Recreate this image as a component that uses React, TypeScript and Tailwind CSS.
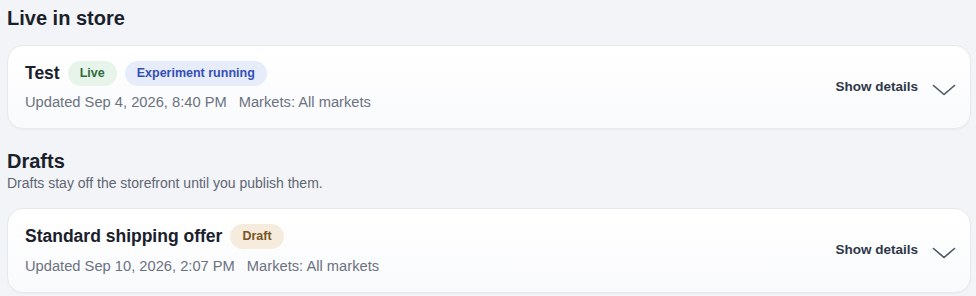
import React from "react";

type Pill = { label: string; className: string };

function Chevron() {
  return (
    <svg width="24" height="12" viewBox="0 0 24 12" fill="none" className="shrink-0">
      <path d="M1.5 1.5 L12 10.5 L22.5 1.5" stroke="#4b5563" strokeWidth="1.6" strokeLinecap="round" strokeLinejoin="round" />
    </svg>
  );
}

function OfferCard({ title, pills, updated }: { title: string; pills: Pill[]; updated: string }) {
  return (
    <div className="flex items-center justify-between rounded-2xl border border-[#e7e9ee] bg-gradient-to-b from-white to-[#f9fafc] pl-[17px] pr-[14px] pt-[14px] pb-[15px] shadow-[0_1px_2px_rgba(16,24,40,0.04)]">
      <div className="flex flex-col">
        <div className="flex items-center gap-[8px]">
          <span className="text-[17.5px] font-bold text-[#1a202c]">{title}</span>
          {pills.map((p) => (
            <span key={p.label} className={`rounded-full px-[12px] py-[3px] text-[12.5px] font-semibold ${p.className}`}>
              {p.label}
            </span>
          ))}
        </div>
        <div className="mt-[5px] flex gap-[12px] text-[14.7px] text-[#6b7280]">
          <span>{updated}</span>
          <span>Markets: All markets</span>
        </div>
      </div>
      <button className="flex items-center gap-[14px]">
        <span className="text-[13.5px] font-bold text-[#2d3748]">Show details</span>
        <span className="mt-[6px]"><Chevron /></span>
      </button>
    </div>
  );
}

export default function App() {
  return (
    <div className="min-h-[296px] w-[976px] bg-[#f2f4f7] px-[7px] pt-[5px] pb-1" style={{ fontFamily: "'Liberation Sans', Arial, sans-serif" }}>
      <h2 className="text-[20px] font-bold leading-[26px] text-[#1a202c]">Live in store</h2>
      <div className="mt-[14px] mr-[-2px]">
        <OfferCard
          title="Test"
          pills={[
            { label: "Live", className: "bg-[#e7f4ea] text-[#2f6b3d]" },
            { label: "Experiment running", className: "bg-[#e6ecfa] text-[#3550b4]" },
          ]}
          updated="Updated Sep 4, 2026, 8:40 PM"
        />
      </div>
      <h2 className="mt-[19px] text-[20px] font-bold leading-[26px] text-[#1a202c]">Drafts</h2>
      <p className="mt-[1px] text-[14px] leading-[17px] text-[#5f6673]">Drafts stay off the storefront until you publish them.</p>
      <div className="mt-[16px] mr-[-2px]">
        <OfferCard
          title="Standard shipping offer"
          pills={[{ label: "Draft", className: "bg-[#f6ecdd] text-[#7a5522]" }]}
          updated="Updated Sep 10, 2026, 2:07 PM"
        />
      </div>
    </div>
  );
}
